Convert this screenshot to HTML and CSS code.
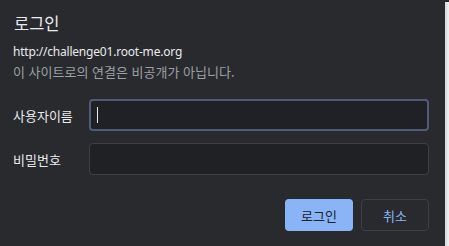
FILE: index.html
```html
<!DOCTYPE html>
<html lang="ko">
<head>
  <meta charset="UTF-8" />
  <title>로그인</title>
  <link rel="stylesheet" href="styles.css">
</head>
<body>
  <div class="page">
    <div class="dialog">
      <h1 class="title">로그인</h1>
      <div class="origin">http://challenge01.root-me.org</div>
      <div class="warning">이 사이트로의 연결은 비공개가 아닙니다.</div>
      <div class="row row-first">
        <label class="label">사용자이름</label>
        <div class="field focused"><span class="caret"></span></div>
      </div>
      <div class="row">
        <label class="label">비밀번호</label>
        <div class="field"></div>
      </div>
      <div class="actions">
        <button class="btn btn-primary">로그인</button>
        <button class="btn btn-cancel">취소</button>
      </div>
    </div>
    <div class="edge"></div>
  </div>
</body>
</html>
```

FILE: styles.css
```css
body {
  margin: 0;
  background-color: #292a2d;
  font-family: "Noto Sans CJK KR", "Noto Sans", sans-serif;
  color: #e8eaed;
}
.page {
  display: flex;
  height: 246px;
  overflow: hidden;
}
.dialog {
  width: 445px;
  box-sizing: border-box;
  padding: 13px 16px 0 13px;
  background-color: #292a2d;
}
.edge {
  width: 4px;
  margin-top: 2px;
  background: linear-gradient(to right, #d6d6d6, #f2f2f2);
}
.title {
  margin: 0 0 9px 1px;
  font-size: 16.5px;
  font-weight: normal;
  line-height: 20px;
}
.origin {
  font-family: "Noto Sans", sans-serif;
  font-size: 12px;
  letter-spacing: -0.2px;
  line-height: 20px;
  color: #e8eaed;
}
.warning {
  font-size: 13px;
  line-height: 20px;
  color: #9aa0a6;
}
.row {
  display: flex;
  align-items: center;
  margin-top: 12px;
}
.row-first {
  margin-top: 17px;
}
.label {
  width: 76px;
  font-size: 13px;
  color: #e8eaed;
}
.field {
  width: 340px;
  height: 32px;
  box-sizing: border-box;
  border: 1px solid #3c4043;
  border-radius: 4px;
  background-color: #202124;
  display: flex;
  align-items: center;
  padding-left: 7px;
}
.field.focused {
  border: 2px solid #4f5c78;
  padding-left: 6px;
}
.caret {
  width: 1px;
  height: 16px;
  background-color: #e8eaed;
}
.actions {
  display: flex;
  justify-content: flex-end;
  gap: 8px;
  margin-top: 24px;
}
.btn {
  width: 68px;
  height: 32px;
  border-radius: 4px;
  font-family: "Noto Sans CJK KR", sans-serif;
  font-size: 13px;
  cursor: pointer;
}
.btn-primary {
  background-color: #8ab4f8;
  border: none;
  color: #202124;
}
.btn-cancel {
  background-color: #292a2d;
  border: 1px solid #3c4043;
  color: #8ab4f8;
}
```
